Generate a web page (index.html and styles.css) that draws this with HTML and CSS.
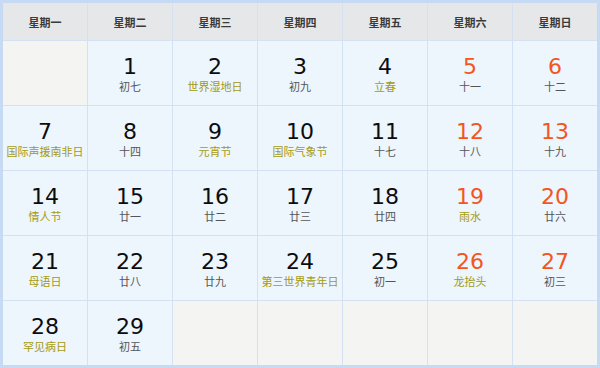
FILE: index.html
```html
<!DOCTYPE html>
<html lang="zh">
<head>
<meta charset="utf-8">
<link rel="stylesheet" href="styles.css">
</head>
<body>
<div class="cal">
  <div class="hd">星期一</div>
  <div class="hd">星期二</div>
  <div class="hd">星期三</div>
  <div class="hd">星期四</div>
  <div class="hd">星期五</div>
  <div class="hd">星期六</div>
  <div class="hd">星期日</div>

  <div class="cell empty"></div>
  <div class="cell"><span class="num">1</span><span class="lun">初七</span></div>
  <div class="cell"><span class="num">2</span><span class="lun fest">世界湿地日</span></div>
  <div class="cell"><span class="num">3</span><span class="lun">初九</span></div>
  <div class="cell"><span class="num">4</span><span class="lun fest">立春</span></div>
  <div class="cell"><span class="num we">5</span><span class="lun">十一</span></div>
  <div class="cell"><span class="num we">6</span><span class="lun">十二</span></div>

  <div class="cell"><span class="num">7</span><span class="lun fest">国际声援南非日</span></div>
  <div class="cell"><span class="num">8</span><span class="lun">十四</span></div>
  <div class="cell"><span class="num">9</span><span class="lun fest">元宵节</span></div>
  <div class="cell"><span class="num">10</span><span class="lun fest">国际气象节</span></div>
  <div class="cell"><span class="num">11</span><span class="lun">十七</span></div>
  <div class="cell"><span class="num we">12</span><span class="lun">十八</span></div>
  <div class="cell"><span class="num we">13</span><span class="lun">十九</span></div>

  <div class="cell"><span class="num">14</span><span class="lun fest">情人节</span></div>
  <div class="cell"><span class="num">15</span><span class="lun">廿一</span></div>
  <div class="cell"><span class="num">16</span><span class="lun">廿二</span></div>
  <div class="cell"><span class="num">17</span><span class="lun">廿三</span></div>
  <div class="cell"><span class="num">18</span><span class="lun">廿四</span></div>
  <div class="cell"><span class="num we">19</span><span class="lun fest">雨水</span></div>
  <div class="cell"><span class="num we">20</span><span class="lun">廿六</span></div>

  <div class="cell"><span class="num">21</span><span class="lun fest">母语日</span></div>
  <div class="cell"><span class="num">22</span><span class="lun">廿八</span></div>
  <div class="cell"><span class="num">23</span><span class="lun">廿九</span></div>
  <div class="cell"><span class="num">24</span><span class="lun fest">第三世界青年日</span></div>
  <div class="cell"><span class="num">25</span><span class="lun">初一</span></div>
  <div class="cell"><span class="num we">26</span><span class="lun fest">龙抬头</span></div>
  <div class="cell"><span class="num we">27</span><span class="lun">初三</span></div>

  <div class="cell"><span class="num">28</span><span class="lun fest">罕见病日</span></div>
  <div class="cell"><span class="num">29</span><span class="lun">初五</span></div>
  <div class="cell empty"></div>
  <div class="cell empty"></div>
  <div class="cell empty"></div>
  <div class="cell empty"></div>
  <div class="cell empty"></div>
</div>
</body>
</html>
```
FILE: styles.css
```css
html, body {
  margin: 0;
  padding: 0;
  background: #ffffff;
}
.cal {
  width: 600px;
  height: 368px;
  box-sizing: border-box;
  border: 3px solid #c7daf4;
  background: #d3e1f2;
  display: grid;
  grid-template-columns: repeat(7, 84px);
  grid-template-rows: 37px repeat(5, 64px);
  gap: 1px;
  font-family: "Noto Sans CJK SC", sans-serif;
}
.hd {
  background: #e6e7e9;
  display: flex;
  align-items: center;
  justify-content: center;
  font-size: 11px;
  font-weight: bold;
  color: #3a3a3a;
}
.cell {
  background: #edf5fd;
  display: flex;
  flex-direction: column;
  align-items: center;
  justify-content: center;
  padding-top: 2px;
}
.cell.empty {
  background: #f4f4f3;
}
.num {
  font-family: "DejaVu Sans", sans-serif;
  font-size: 22px;
  line-height: 25px;
  color: #0c0c0c;
}
.num.we {
  color: #f2561d;
}
.lun {
  font-family: "Noto Sans CJK SC", sans-serif;
  font-size: 11px;
  line-height: 15px;
  color: #555;
}
.lun.fest {
  color: #a49a10;
}
```
